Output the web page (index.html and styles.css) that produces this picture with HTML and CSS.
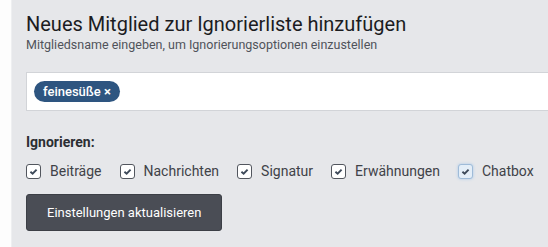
FILE: index.html
```html
<!DOCTYPE html>
<html lang="de">
<head>
  <meta charset="UTF-8" />
  <title>Ignorierliste</title>
  <link rel="stylesheet" href="styles.css">
</head>
<body>

  <div class="panel">
    <h2 class="title">Neues Mitglied zur Ignorierliste hinzufügen</h2>
    <p class="subtitle">Mitgliedsname eingeben, um Ignorierungsoptionen einzustellen</p>

    <div class="member-input">
      <span class="tag">feinesüße <span class="tag-x">×</span></span>
    </div>

    <div class="ignore-label">Ignorieren:</div>

    <div class="options">
      <label class="option"><span class="check"><svg viewBox="0 0 10 10"><path d="M2.2 5.2 L4.2 7 L7.8 3.2"/></svg></span>Beiträge</label>
      <label class="option"><span class="check"><svg viewBox="0 0 10 10"><path d="M2.2 5.2 L4.2 7 L7.8 3.2"/></svg></span>Nachrichten</label>
      <label class="option"><span class="check"><svg viewBox="0 0 10 10"><path d="M2.2 5.2 L4.2 7 L7.8 3.2"/></svg></span>Signatur</label>
      <label class="option"><span class="check"><svg viewBox="0 0 10 10"><path d="M2.2 5.2 L4.2 7 L7.8 3.2"/></svg></span>Erwähnungen</label>
      <label class="option"><span class="check focused"><svg viewBox="0 0 10 10"><path d="M2.2 5.2 L4.2 7 L7.8 3.2"/></svg></span>Chatbox</label>
    </div>

    <button class="submit">Einstellungen aktualisieren</button>
  </div>

</body>
</html>
```

FILE: styles.css
```css
html, body {
  margin: 0;
  padding: 0;
  height: 100%;
  background: #fdfdfd;
  font-family: Roboto, "Noto Sans", sans-serif;
  overflow: hidden;
}

.panel {
  margin-left: 11px;
  height: 100%;
  background: #e6e7ea;
  border-left: 1px solid #eeeff1;
  padding: 11px 0 0 14px;
  box-sizing: border-box;
}

.title {
  margin: 0;
  font-size: 20px;
  font-weight: 400;
  line-height: 26px;
  color: #1b1c1f;
}

.subtitle {
  margin: 0;
  font-size: 12.5px;
  line-height: 16px;
  color: #50535a;
}

.member-input {
  margin-top: 19px;
  height: 37px;
  background: #fff;
  border: 1px solid #d2d4d8;
  border-right: none;
  display: flex;
  align-items: center;
  padding-left: 7px;
}

.tag {
  background: #2e5580;
  color: #fff;
  font-size: 13px;
  font-weight: 500;
  line-height: 21px;
  padding: 0 9px;
  border-radius: 11px;
}

.tag-x {
  font-weight: 700;
}

.ignore-label {
  margin-top: 22px;
  font-size: 14px;
  font-weight: 700;
  line-height: 18px;
  color: #2c2e33;
}

.options {
  margin-top: 11px;
  display: flex;
  gap: 18px;
  font-size: 14px;
  color: #3f4248;
}

.option {
  display: flex;
  align-items: center;
  gap: 9px;
  line-height: 18px;
}

.check {
  width: 13px;
  height: 13px;
  border: 1px solid #52565e;
  border-radius: 3px;
  background: #fff;
  display: flex;
  align-items: center;
  justify-content: center;
}

.check svg {
  width: 11px;
  height: 11px;
  fill: none;
  stroke: #3e4a5a;
  stroke-width: 1.7;
}

.check.focused {
  border-color: #9fbbd8;
  background: #e4eef8;
  box-shadow: 0 0 3px #a9c8ea;
}

.submit {
  margin-top: 14px;
  background: #4a4d55;
  color: #fff;
  border: 1px solid #3c3f46;
  border-radius: 3px;
  font-family: inherit;
  font-size: 13px;
  height: 37px;
  padding: 0 20px;
}
```
